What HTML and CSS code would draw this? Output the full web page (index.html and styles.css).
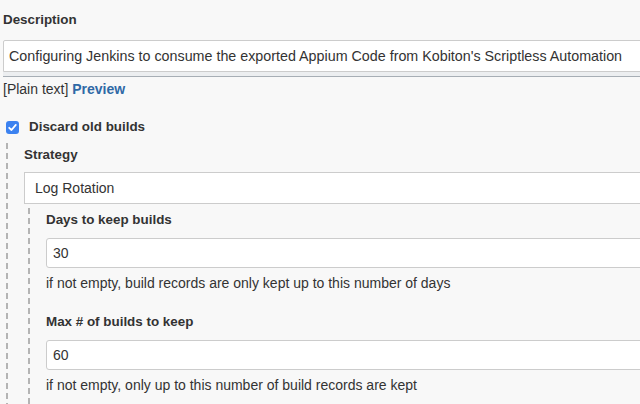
FILE: index.html
```html
<!DOCTYPE html>
<html lang="en">
<head>
    <meta charset="UTF-8">
    <meta name="viewport" content="width=device-width, initial-scale=1.0">
    <title>Job configuration</title>
    <link rel="stylesheet" href="styles.css">
</head>
<body>
    <form class="config-form">
        <div class="setting">
            <label class="setting-name" for="description">Description</label>
            <div class="textarea-wrap">
                <textarea id="description" rows="1">Configuring Jenkins to consume the exported Appium Code from Kobiton's Scriptless Automation</textarea>
                <div class="grip"></div>
            </div>
            <div class="preview-line">[Plain text] <a href="#" class="preview-link">Preview</a></div>
        </div>

        <label class="check-row">
            <span class="check-box">
                <svg viewBox="0 0 13 13" width="13" height="13">
                    <path d="M3.2 6.8 L5.5 9 L9.8 3.9" fill="none" stroke="#fff" stroke-width="1.8" stroke-linecap="round" stroke-linejoin="round"/>
                </svg>
            </span>
            Discard old builds
        </label>

        <div class="nested">
            <label class="setting-name" for="strategy">Strategy</label>
            <div class="select-box" id="strategy">Log Rotation</div>

            <div class="nested inner">
                <label class="setting-name" for="daysToKeep">Days to keep builds</label>
                <input type="text" class="text-input" id="daysToKeep" value="30">
                <div class="help">if not empty, build records are only kept up to this number of days</div>

                <label class="setting-name spaced" for="numToKeep">Max # of builds to keep</label>
                <input type="text" class="text-input" id="numToKeep" value="60">
                <div class="help">if not empty, only up to this number of build records are kept</div>
            </div>
        </div>
    </form>
</body>
</html>
```

FILE: styles.css
```css
* {
    box-sizing: border-box;
}

body {
    margin: 0;
    overflow: hidden;
    background-color: #f8f8f8;
    color: #333;
    font-family: 'Liberation Sans', Arial, sans-serif;
    font-size: 14px;
    line-height: 16px;
}

.config-form {
    width: 720px;
    padding: 12px 0 0 3px;
}

.setting-name {
    display: block;
    font-size: 13.4px;
    font-weight: bold;
}

.textarea-wrap {
    margin-top: 12px;
}

textarea {
    display: block;
    width: 100%;
    height: 32px;
    padding: 7px 5px;
    border: 1px solid #ccc;
    border-radius: 2px 2px 0 0;
    background-color: #fff;
    color: #333;
    font-family: inherit;
    font-size: 14.3px;
    line-height: 17px;
    resize: none;
    overflow: hidden;
    white-space: nowrap;
}

.grip {
    height: 5px;
    background-color: #eceef0;
    border-bottom: 1px solid #a7aeb5;
}

.preview-line {
    margin-top: 4px;
}

.preview-link {
    color: #2f69a6;
    font-weight: bold;
    text-decoration: none;
}

.check-row {
    display: flex;
    align-items: center;
    gap: 10px;
    margin-top: 22px;
    padding-left: 3px;
    font-size: 13.4px;
    font-weight: bold;
}

.check-box {
    display: flex;
    width: 13px;
    height: 13px;
    border-radius: 3px;
    background-color: #3c82f0;
}

.nested {
    margin: 8px 0 0 3px;
    padding: 4px 0 0 18px;
    background: repeating-linear-gradient(to bottom, #b4b4b4 0 6px, transparent 6px 10px) left top / 2px 100% no-repeat;
    min-height: 280px;
}

.nested.inner {
    margin: 4px 0 0 4px;
    min-height: 200px;
}

.select-box {
    margin-top: 9px;
    height: 32px;
    padding: 0 10px;
    border: 1px solid #ccc;
    background-color: #fff;
    line-height: 30px;
}

.text-input {
    display: block;
    width: 100%;
    height: 30px;
    margin-top: 10px;
    padding: 0 6px;
    border: 1px solid #ccc;
    border-radius: 3px;
    background-color: #fff;
    color: #333;
    font-family: inherit;
    font-size: 14px;
}

.help {
    margin-top: 7px;
}

.spaced {
    margin-top: 23px;
}
```
